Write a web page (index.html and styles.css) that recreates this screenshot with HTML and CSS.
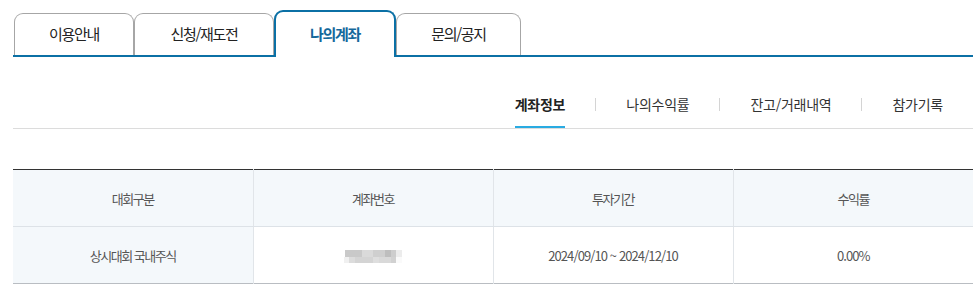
FILE: index.html
```html
<!DOCTYPE html>
<html lang="ko">
<head>
  <meta charset="UTF-8">
  <title>나의계좌 - 계좌정보</title>
  <link rel="stylesheet" href="styles.css">
</head>
<body>
  <div class="wrap">
    <!-- Main tabs -->
    <ul class="tabs">
      <li class="tab tab-1">이용안내</li>
      <li class="tab tab-2">신청/재도전</li>
      <li class="tab tab-3 on">나의계좌</li>
      <li class="tab tab-4">문의/공지</li>
    </ul>
    <!-- Sub menu -->
    <ul class="subnav">
      <li><a class="on">계좌정보</a></li>
      <li class="bar"></li>
      <li><a>나의수익률</a></li>
      <li class="bar"></li>
      <li><a>잔고/거래내역</a></li>
      <li class="bar"></li>
      <li><a>참가기록</a></li>
    </ul>
    <!-- Account table -->
    <table class="acc-table">
      <tr>
        <th>대회구분</th>
        <th>계좌번호</th>
        <th>투자기간</th>
        <th>수익률</th>
      </tr>
      <tr>
        <td class="first">상시대회 국내주식</td>
        <td><span class="masked"><span class="row-a"></span><span class="row-b"></span></span></td>
        <td>2024/09/10 ~ 2024/12/10</td>
        <td>0.00%</td>
      </tr>
    </table>
  </div>
</body>
</html>
```

FILE: styles.css
```css
body {
  margin: 0;
  background: #fff;
  font-family: "Noto Sans CJK KR", "Noto Sans", sans-serif;
}
.wrap {
  width: 960px;
  margin-left: 13px;
}

/* main tabs */
.tabs {
  list-style: none;
  margin: 0;
  padding: 10px 0 0 1px;
  display: flex;
  align-items: flex-end;
  border-bottom: 2px solid #0b70a5;
  height: 45px;
}
.tab {
  box-sizing: border-box;
  height: 42px;
  border: 1px solid #a6a6a6;
  border-bottom: none;
  border-radius: 9px 9px 0 0;
  background: #fff;
  text-align: center;
  line-height: 40px;
  font-size: 15px;
  letter-spacing: -1.3px;
  color: #222;
}
.tab-1 { width: 120px; }
.tab-2 { width: 140px; }
.tab-3 { width: 122px; }
.tab-4 { width: 125px; }
.tab.on {
  height: 47px;
  margin-bottom: -2px;
  border: 2px solid #0b70a5;
  border-bottom: none;
  line-height: 44px;
  color: #14689b;
  font-weight: bold;
}

/* sub menu */
.subnav {
  list-style: none;
  margin: 37px 0 0;
  padding: 0;
  display: flex;
  justify-content: flex-end;
  align-items: flex-start;
  border-bottom: 1px solid #dcdcdc;
}
.subnav li {
  padding: 0 30px;
}
.subnav li.bar {
  padding: 0;
  width: 1px;
  height: 13px;
  margin-top: 4px;
  background: #d4d4d4;
}
.subnav a {
  display: block;
  line-height: 20px;
  padding-bottom: 12px;
  border-bottom: 2px solid transparent;
  font-size: 14px;
  letter-spacing: -0.25px;
  color: #333;
}
.subnav a.on {
  font-weight: bold;
  color: #222;
  border-bottom-color: #29abe2;
}

/* table */
.acc-table {
  width: 960px;
  margin-top: 40px;
  border-collapse: collapse;
  table-layout: fixed;
  border-top: 1px solid #333;
  border-bottom: 1px solid #b9bdc2;
}
.acc-table th,
.acc-table td {
  height: 56px;
  padding: 0;
  text-align: center;
  font-weight: normal;
  font-size: 13px;
  letter-spacing: -1.5px;
  color: #555;
  border-left: 1px solid #e1e5e9;
}
.acc-table th:first-child,
.acc-table td:first-child {
  border-left: none;
}
.acc-table th {
  background: #f4f8fb;
  border-bottom: 1px solid #dde2e7;
}
.acc-table td.first {
  background: #f4f8fb;
}
.acc-table td {
  letter-spacing: -0.9px;
}
.acc-table td.first {
  letter-spacing: -1.5px;
}

/* blurred account number */
.masked {
  display: inline-block;
  width: 58px;
  height: 13px;
  vertical-align: middle;
}
.masked span {
  display: block;
  height: 6px;
}
.masked .row-a {
  height: 7px;
  background: linear-gradient(to right, #fff 0, #fff 1px, #c9c9c9 1px, #c9c9c9 18px, #dadada 18px, #dadada 29px, #cfcfcf 29px, #cfcfcf 41px, #bebebe 41px, #bebebe 47px, #cdcdcd 47px, #cdcdcd 52px, #ececec 52px, #ececec 58px);
}
.masked .row-b {
  background: linear-gradient(to right, #f0f0f0 0, #f0f0f0 5px, #dcdcdc 5px, #dcdcdc 11px, #d4d4d4 11px, #d4d4d4 29px, #dedede 29px, #dedede 35px, #d9d9d9 35px, #d9d9d9 47px, #d1d1d1 47px, #d1d1d1 52px, #fafafa 52px, #fafafa 58px);
}
```
